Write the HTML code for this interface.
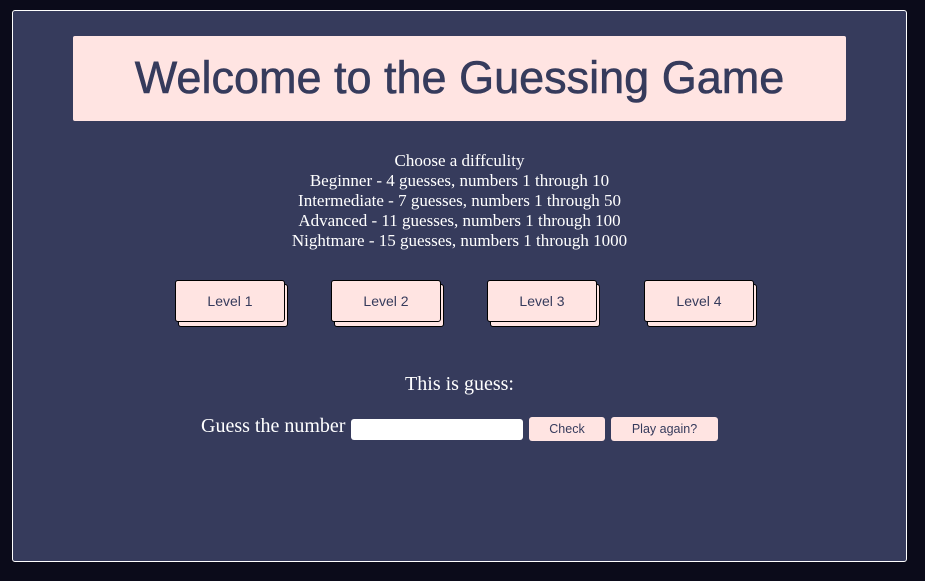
<!DOCTYPE html>
<html><head><style>
body{margin:0;width:925px;height:581px;background:#0b0b1a;position:relative;overflow:hidden;font-family:"Liberation Serif",serif;}
.panel{position:absolute;left:12px;top:10px;width:893px;height:550px;background:#363b5c;border:1px solid #fff;border-radius:3px;}
.title{position:absolute;left:60px;top:25px;width:773px;height:85px;background:#ffe4e2;border-radius:2px;color:#363b5c;font-family:"Liberation Sans",sans-serif;font-size:45px;line-height:83px;text-align:center;-webkit-text-stroke:0.6px #363b5c;}
.info{position:absolute;left:0;width:893px;top:140px;text-align:center;color:#fff;font-size:17px;line-height:20px;}
.lv{position:absolute;top:269px;width:110px;height:42px;}
.lv .sh{position:absolute;left:3px;top:4px;width:108px;height:41px;background:#ffe4e2;border:1px solid #000;border-radius:3px;}
.lv .b{position:absolute;left:0;top:0;width:108px;height:40px;background:#ffe4e2;border:1px solid #000;border-radius:3px;color:#363b5c;font-family:"Liberation Sans",sans-serif;font-size:14px;line-height:41px;text-align:center;}
.g{position:absolute;left:0;width:893px;top:362px;text-align:center;color:#fff;font-size:20px;}
.row{position:absolute;top:404px;color:#fff;font-size:20px;}
.inp{position:absolute;left:338px;top:408px;width:172px;height:21px;background:#fff;border-radius:3px;}
.btn{position:absolute;top:406px;height:24px;background:#ffe4e2;border-radius:3px;color:#363b5c;font-family:"Liberation Sans",sans-serif;font-size:12.5px;line-height:24px;text-align:center;}
</style></head><body>
<div class="panel">
<div class="title">Welcome to the Guessing Game</div>
<div class="info">Choose a diffculity<br>Beginner - 4 guesses, numbers 1 through 10<br>Intermediate - 7 guesses, numbers 1 through 50<br>Advanced - 11 guesses, numbers 1 through 100<br>Nightmare - 15 guesses, numbers 1 through 1000</div>
<div class="lv" style="left:162px"><div class="sh"></div><div class="b">Level 1</div></div>
<div class="lv" style="left:318px"><div class="sh"></div><div class="b">Level 2</div></div>
<div class="lv" style="left:474px"><div class="sh"></div><div class="b">Level 3</div></div>
<div class="lv" style="left:631px"><div class="sh"></div><div class="b">Level 4</div></div>
<div class="g">This is guess:</div>
<div class="row" style="left:188px">Guess the number</div>
<div class="inp"></div>
<div class="btn" style="left:516px;width:76px">Check</div>
<div class="btn" style="left:598px;width:107px">Play again?</div>
</div>
</body></html>
